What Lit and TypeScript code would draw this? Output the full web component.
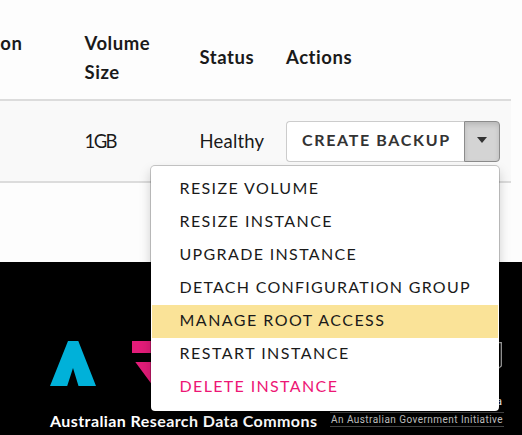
import { LitElement, html, css } from "lit";
import { customElement } from "lit/decorators.js";
import { classMap } from "lit/directives/class-map.js";

interface Action {
  label: string;
  spacing: number;
  active?: boolean;
  danger?: boolean;
}

const ACTIONS: Action[] = [
  { label: "Resize Volume", spacing: 1.39 },
  { label: "Resize Instance", spacing: 1.43 },
  { label: "Upgrade Instance", spacing: 1.35 },
  { label: "Detach Configuration Group", spacing: 1.27 },
  { label: "Manage Root Access", spacing: 1.48, active: true },
  { label: "Restart Instance", spacing: 1.48 },
  { label: "Delete Instance", spacing: 1.36, danger: true },
];

@customElement("action-menu")
class ActionMenu extends LitElement {
  static styles = css`
    :host {
      display: block;
      box-sizing: border-box;
      width: 350px;
      height: 247px;
      padding: 7px 1px;
      background: #fff;
      background-clip: padding-box;
      border: 1px solid rgba(0, 0, 0, 0.2);
      border-radius: 5px;
      box-shadow: 0 6px 12px rgba(0, 0, 0, 0.175);
    }
    .item {
      height: 33px;
      line-height: 30px;
      padding-left: 27.5px;
      font-size: 16px;
      text-transform: uppercase;
      white-space: nowrap;
      color: #1a1a1a;
    }
    .active { background: #fae398; }
    .danger { color: #ed1675; }
  `;
  render() {
    return ACTIONS.map(
      (a) => html`<div
        class=${classMap({ item: true, active: !!a.active, danger: !!a.danger })}
        style="letter-spacing:${a.spacing}px"
      >${a.label}</div>`
    );
  }
}

@customElement("page-footer")
class PageFooter extends LitElement {
  static styles = css`
    :host {
      display: flex;
      box-sizing: border-box;
      height: 173px;
      padding: 79px 18px 0 50px;
      justify-content: space-between;
      background: #000;
      color: #fff;
    }
    svg { display: block; }
    .name {
      margin-top: 23px;
      font: 700 16px/24px "Lato", sans-serif;
      letter-spacing: 0.42px;
      white-space: nowrap;
    }
    .gov { width: 174px; }
    .mark { margin-left: auto; }
    .country {
      height: 26px;
      padding: 20px 2px 0 0;
      text-align: right;
      font: 11px/26px "Roboto", sans-serif;
    }
    .initiative {
      margin-top: -3px;
      height: 13px;
      border-top: 1px solid #444;
      border-bottom: 1px solid #444;
      font: 10px/14px "Roboto", sans-serif;
      letter-spacing: 0.45px;
      padding-left: 1px;
      white-space: nowrap;
      color: #c8c8c8;
    }
  `;
  render() {
    return html`
      <div>
        <svg width="130" height="45" viewBox="0 0 130 45">
          <path fill="#00b1d9" d="M18 0H28.3L46 45H28.5L23 27L17.2 45H0Z" />
          <path fill="#e31c79" d="M82 0H120V12H82ZM85.3 21H120V45H103Z" />
        </svg>
        <div class="name">Australian Research Data Commons</div>
      </div>
      <div class="gov">
        <svg class="mark" width="20" height="28" viewBox="0 0 20 28">
          <path fill="none" stroke="#aaa" stroke-width="1.2" d="M2 1.6H17.3V25L15 27H2" />
        </svg>
        <div class="country">Australia</div>
        <div class="initiative">An Australian Government Initiative</div>
      </div>
    `;
  }
}

@customElement("app-root")
class AppRoot extends LitElement {
  static styles = css`
    :host {
      display: block;
      position: relative;
      width: 522px;
      height: 435px;
      overflow: hidden;
      background: #fdfdfd;
      color: #1a1a1a;
      font-family: "Lato", sans-serif;
      font-variant-ligatures: none;
    }
    .page { height: 262px; }
    .row {
      display: grid;
      grid-template-columns: 84.5px 115px 86.5px 225px;
      width: 511px;
      align-items: center;
      border-bottom: 2px solid #dcdcdc;
      font-size: 18.5px;
      line-height: 29px;
      white-space: nowrap;
    }
    .head {
      height: 83px;
      padding-top: 16px;
      font-weight: 700;
      letter-spacing: 0.55px;
    }
    .body {
      height: 80px;
      background: #f9f9f9;
    }
    .size {
      letter-spacing: -1.6px;
    }
    .health {
      letter-spacing: 0.2px;
    }
    .first {
      align-self: start;
      margin-top: 13px;
      width: 22.5px;
      display: flex;
      justify-content: flex-end;
    }
    .group { display: flex; height: 41px; }
    .button {
      box-sizing: border-box;
      width: 178px;
      padding-left: 15px;
      border: 1px solid #ccc;
      border-right: 0;
      border-radius: 4px 0 0 4px;
      background: #fff;
      color: #333;
      font-size: 16px;
      font-weight: 700;
      line-height: 36px;
      letter-spacing: 1.66px;
    }
    .toggle {
      box-sizing: border-box;
      width: 36px;
      display: flex;
      align-items: center;
      justify-content: center;
      padding: 0 1px 2px 0;
      border: 1px solid #8c8c8c;
      border-radius: 0 4px 4px 0;
      background: #d4d4d4;
      box-shadow: inset 0 3px 5px rgba(0, 0, 0, 0.125);
    }
    .caret {
      border: 5px solid transparent;
      border-top: 6px solid #333;
      border-bottom: 0;
    }
    .menu {
      position: absolute;
      left: 150px;
      top: 165px;
    }
  `;
  render() {
    return html`
      <div class="page">
        <div class="row head">
          <div class="first">on</div>
          <div>Volume<br />Size</div>
          <div>Status</div>
          <div>Actions</div>
        </div>
        <div class="row body">
          <div></div>
          <div class="size">1GB</div>
          <div class="health">Healthy</div>
          <div class="group">
            <div class="button">CREATE BACKUP</div>
            <div class="toggle"><span class="caret"></span></div>
          </div>
        </div>
      </div>
      <page-footer></page-footer>
      <action-menu class="menu"></action-menu>
    `;
  }
}
